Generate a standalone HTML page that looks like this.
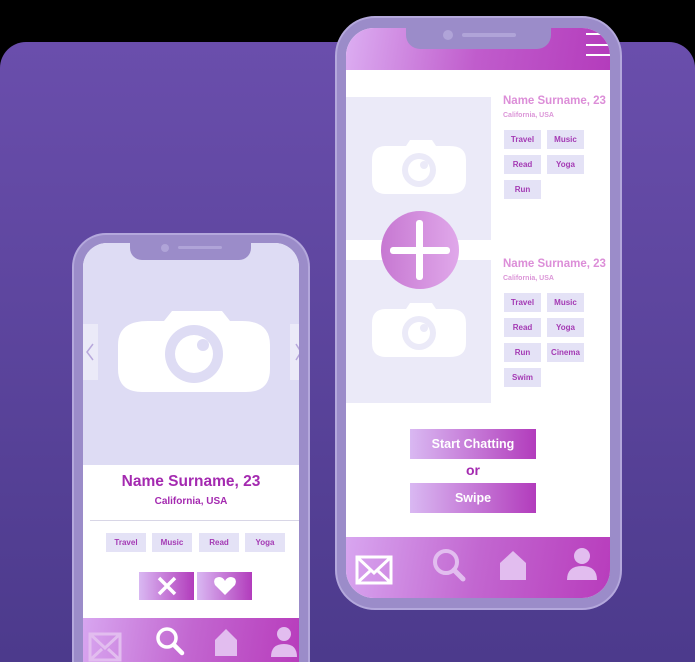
<!DOCTYPE html>
<html><head><style>
*{margin:0;padding:0;box-sizing:border-box}
html,body{width:695px;height:662px;overflow:hidden}
body{background:#000;position:relative;font-family:"Liberation Sans",sans-serif;font-weight:bold}
.abs{position:absolute;white-space:nowrap}
.bg{left:0;top:42px;width:695px;height:620px;border-radius:26px 26px 0 0;background:linear-gradient(180deg,#6a4eac,#4c3a8c)}
.frame{background:#9b8cc9;border:2px solid #b4a8dc}
.tag{position:absolute;background:#e4e2f6;color:#a43ab4;font-size:8px;text-align:center;line-height:19px}
.grad{background:linear-gradient(90deg,#d9b8f2,#b23cbc)}
.btn{position:absolute;color:#fff;font-size:12.5px;text-align:center}
</style></head><body>
<div class="abs bg"></div>

<!-- right phone -->
<div class="abs frame" style="left:335px;top:16px;width:287px;height:594px;border-radius:40px"></div>
<div class="abs" style="left:346px;top:28px;width:264px;height:570px;border-radius:28px;background:#fff;overflow:hidden">
  <div class="abs grad" style="left:0;top:0;width:264px;height:42px;background:linear-gradient(100deg,#dcaef2,#c05ccc 50%,#b43cbc)"></div>
  <div class="abs" style="left:60px;top:0;width:145px;height:21px;background:#9b8cc9;border-radius:0 0 14px 14px"></div>
  <div class="abs" style="left:97px;top:2px;width:10px;height:10px;border-radius:5px;background:#b0a4d8"></div>
  <div class="abs" style="left:116px;top:5px;width:54px;height:4px;border-radius:2px;background:#b0a4d8"></div>
  <div class="abs" style="left:240px;top:5px;width:24px;height:2px;background:#fff"></div>
  <div class="abs" style="left:240px;top:16px;width:24px;height:2px;background:#fff"></div>
  <div class="abs" style="left:240px;top:26px;width:24px;height:2px;background:#fff"></div>

  <div class="abs" style="left:0;top:69px;width:145px;height:143px;background:#ebeaf8"></div>
  <div class="abs" style="left:0;top:232px;width:145px;height:143px;background:#ebeaf8"></div>
  <svg class="abs" style="left:26px;top:112px" width="94" height="54"><path d="M20 6h14l4-6h22l4 6h14q16 0 16 14v20q0 14-16 14H14Q0 54 0 40V20Q0 6 14 6z" fill="#fff"/><circle cx="47" cy="30" r="17" fill="#ebeaf8"/><circle cx="47" cy="30" r="11" fill="#fff"/><circle cx="52" cy="25" r="4" fill="#ebeaf8"/></svg>
  <svg class="abs" style="left:26px;top:275px" width="94" height="54"><path d="M20 6h14l4-6h22l4 6h14q16 0 16 14v20q0 14-16 14H14Q0 54 0 40V20Q0 6 14 6z" fill="#fff"/><circle cx="47" cy="30" r="17" fill="#ebeaf8"/><circle cx="47" cy="30" r="11" fill="#fff"/><circle cx="52" cy="25" r="4" fill="#ebeaf8"/></svg>
  <div class="abs" style="left:35px;top:183px;width:78px;height:78px;border-radius:50%;background:linear-gradient(90deg,#c778d2,#e0a8ea)"></div>
  <div class="abs" style="left:44px;top:219px;width:60px;height:7px;border-radius:3px;background:#fff"></div>
  <div class="abs" style="left:70px;top:192px;width:7px;height:60px;border-radius:3px;background:#fff"></div>

  <div class="abs" style="left:157px;top:67px;color:#dc8ed8;font-size:11.5px">Name Surname, 23</div>
  <div class="abs" style="left:157px;top:84px;color:#dc96d8;font-size:7px">California, USA</div>
  <div class="tag" style="left:158px;top:102px;width:37px">Travel</div>
  <div class="tag" style="left:201px;top:102px;width:37px">Music</div>
  <div class="tag" style="left:158px;top:127px;width:37px">Read</div>
  <div class="tag" style="left:201px;top:127px;width:37px">Yoga</div>
  <div class="tag" style="left:158px;top:152px;width:37px">Run</div>

  <div class="abs" style="left:157px;top:230px;color:#dc8ed8;font-size:11.5px">Name Surname, 23</div>
  <div class="abs" style="left:157px;top:247px;color:#dc96d8;font-size:7px">California, USA</div>
  <div class="tag" style="left:158px;top:265px;width:37px">Travel</div>
  <div class="tag" style="left:201px;top:265px;width:37px">Music</div>
  <div class="tag" style="left:158px;top:290px;width:37px">Read</div>
  <div class="tag" style="left:201px;top:290px;width:37px">Yoga</div>
  <div class="tag" style="left:158px;top:315px;width:37px">Run</div>
  <div class="tag" style="left:201px;top:315px;width:37px">Cinema</div>
  <div class="tag" style="left:158px;top:340px;width:37px">Swim</div>

  <div class="btn grad" style="left:64px;top:401px;width:126px;height:30px;line-height:30px">Start Chatting</div>
  <div class="abs" style="left:0;top:434px;width:254px;text-align:center;color:#a42ab0;font-size:14px">or</div>
  <div class="btn grad" style="left:64px;top:455px;width:126px;height:30px;line-height:30px">Swipe</div>

  <div class="abs" style="left:0;top:509px;width:264px;height:61px;background:linear-gradient(100deg,#d8a6f0,#c266d0 50%,#b83cbc)"></div>
  <svg class="abs" style="left:9px;top:525px" width="38" height="32"><path d="M2 4h34v26H2z" fill="none" stroke="#fff" stroke-width="3"/><path d="M2 4l17 16L36 4" fill="none" stroke="#fff" stroke-width="3"/><path d="M2 30l13-12M36 30L23 18" stroke="#fff" stroke-width="3"/></svg>
  <svg class="abs" style="left:86px;top:520px" width="34" height="34"><circle cx="14" cy="14" r="11" fill="none" stroke="#e2bdef" stroke-width="4"/><path d="M22 22l9 9" stroke="#e2bdef" stroke-width="5" stroke-linecap="round"/></svg>
  <svg class="abs" style="left:152px;top:522px" width="30" height="30"><path d="M15 1l13 12v17H2V13z" fill="#e2bdef"/></svg>
  <svg class="abs" style="left:220px;top:518px" width="32" height="34"><circle cx="16" cy="10" r="8" fill="#e2bdef"/><path d="M1 34q0-14 15-14t15 14z" fill="#e2bdef"/></svg>
</div>

<!-- left phone -->
<div class="abs frame" style="left:72px;top:233px;width:238px;height:429px;border-radius:34px 34px 0 0;border-bottom:0"></div>
<div class="abs" style="left:83px;top:243px;width:216px;height:419px;border-radius:24px 24px 0 0;background:#fff;overflow:hidden">
  <div class="abs" style="left:0;top:0;width:216px;height:222px;background:#dedcf4"></div>
  <div class="abs" style="left:47px;top:0;width:121px;height:17px;background:#9b8cc9;border-radius:0 0 12px 12px"></div>
  <div class="abs" style="left:78px;top:1px;width:8px;height:8px;border-radius:4px;background:#b0a4d8"></div>
  <div class="abs" style="left:95px;top:3px;width:44px;height:3px;border-radius:2px;background:#b0a4d8"></div>
  <div class="abs" style="left:0;top:81px;width:15px;height:56px;background:#ebeaf8"></div>
  <div class="abs" style="left:207px;top:81px;width:9px;height:56px;background:#ebeaf8"></div>
  <svg class="abs" style="left:1px;top:99px" width="12" height="20"><path d="M9 2L3 10l6 8" fill="none" stroke="#b8a8dc" stroke-width="1.5"/></svg>
  <svg class="abs" style="left:211px;top:99px" width="8" height="20"><path d="M2 2l5 8-5 8" fill="none" stroke="#b8a8dc" stroke-width="1.5"/></svg>
  <svg class="abs" style="left:35px;top:68px" width="152" height="81"><path d="M30 10h16l8-10h50l8 10h12q28 0 28 24v24q0 23-24 23H24Q0 81 0 58V34Q0 10 30 10z" fill="#fff"/><circle cx="76" cy="43" r="29" fill="#dedcf4"/><circle cx="76" cy="43" r="19" fill="#fff"/><circle cx="85" cy="34" r="6" fill="#dedcf4"/></svg>
  <div class="abs" style="left:0;top:230px;width:216px;text-align:center;color:#a42ab0;font-size:15.5px">Name Surname, 23</div>
  <div class="abs" style="left:0;top:253px;width:216px;text-align:center;color:#a42ab0;font-size:10px">California, USA</div>
  <div class="abs" style="left:7px;top:277px;width:209px;height:1px;background:#d8d6e6"></div>
  <div class="tag" style="left:23px;top:290px;width:40px;font-size:8px">Travel</div>
  <div class="tag" style="left:69px;top:290px;width:40px;font-size:8px">Music</div>
  <div class="tag" style="left:116px;top:290px;width:40px;font-size:8px">Read</div>
  <div class="tag" style="left:162px;top:290px;width:40px;font-size:8px">Yoga</div>
  <div class="abs grad" style="left:56px;top:329px;width:55px;height:28px"></div>
  <div class="abs grad" style="left:114px;top:329px;width:55px;height:28px"></div>
  <svg class="abs" style="left:74px;top:333px" width="20" height="20"><path d="M2 2l16 16M18 2L2 18" stroke="#fff" stroke-width="3.5"/></svg>
  <svg class="abs" style="left:130px;top:333px" width="24" height="20"><path d="M12 19L2 9Q-1 2 6 1q4 0 6 4 2-4 6-4 7 1 4 8z" fill="#fff"/></svg>
  <div class="abs" style="left:0;top:375px;width:216px;height:44px;background:linear-gradient(100deg,#d8a6f0,#c266d0 50%,#b83cbc)"></div>
  <svg class="abs" style="left:5px;top:389px" width="34" height="30"><path d="M2 2h30v26H2z" fill="none" stroke="#e2bdef" stroke-width="3"/><path d="M2 2l15 14L32 2M2 28l12-11M32 28L20 17" fill="none" stroke="#e2bdef" stroke-width="3"/></svg>
  <svg class="abs" style="left:72px;top:383px" width="30" height="32"><circle cx="12" cy="12" r="9" fill="none" stroke="#fff" stroke-width="3.5"/><path d="M19 19l8 8" stroke="#fff" stroke-width="4.5" stroke-linecap="round"/></svg>
  <svg class="abs" style="left:130px;top:385px" width="26" height="28"><path d="M13 1l11 11v16H2V12z" fill="#e2bdef"/></svg>
  <svg class="abs" style="left:187px;top:382px" width="28" height="32"><circle cx="14" cy="9" r="7" fill="#e2bdef"/><path d="M1 32q0-13 13-13t13 13z" fill="#e2bdef"/></svg>
</div>
</body></html>
